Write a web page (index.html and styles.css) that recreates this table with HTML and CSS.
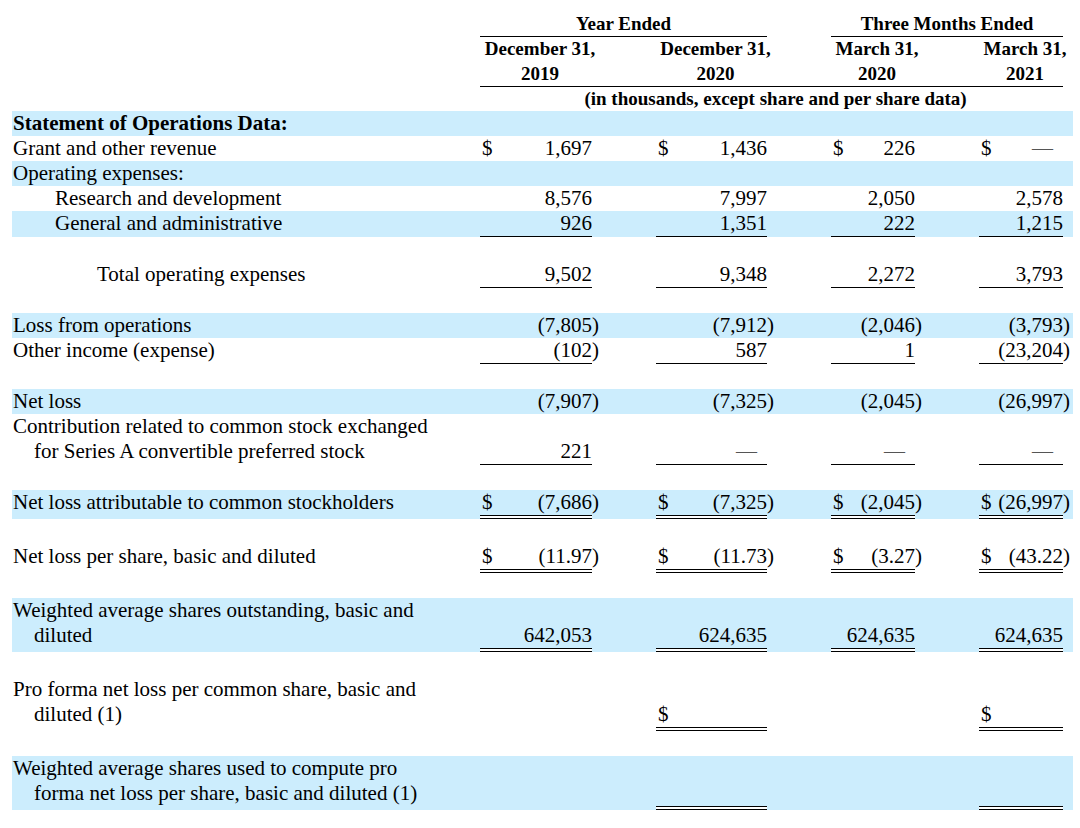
FILE: index.html
```html
<!DOCTYPE html>
<html lang="en">
<head>
<meta charset="utf-8">
<title>Statement of Operations Data</title>
<link rel="stylesheet" href="styles.css">
</head>
<body>
<div class="page">
<table class="fin">
  <colgroup>
    <col class="w-lbl">
    <col class="w-c1"><col class="w-p"><col class="w-g">
    <col class="w-c2"><col class="w-p"><col class="w-g">
    <col class="w-c3"><col class="w-p"><col class="w-g">
    <col class="w-c4"><col class="w-p"><col class="w-end">
  </colgroup>
  <thead>
    <tr class="h-top">
      <td></td>
      <th colspan="4" class="u">Year Ended</th>
      <td></td><td></td>
      <th colspan="4" class="u">Three Months Ended</th>
      <td></td><td></td>
    </tr>
    <tr class="h-mid">
      <td></td>
      <th><span class="hd">December 31,</span></th><td></td><td></td>
      <th><span class="hd">December 31,</span></th><td></td><td></td>
      <th><span class="hd">March 31,</span></th><td></td><td></td>
      <th><span class="hd">March 31,</span></th><td></td><td></td>
    </tr>
    <tr class="h-top">
      <td></td>
      <th class="u"><span class="hd">2019</span></th><td class="u"></td><td class="u"></td>
      <th class="u"><span class="hd">2020</span></th><td class="u"></td><td class="u"></td>
      <th class="u"><span class="hd">2020</span></th><td class="u"></td><td class="u"></td>
      <th class="u"><span class="hd">2021</span></th><td></td><td></td>
    </tr>
    <tr class="h-mid">
      <td></td>
      <th colspan="11">(in thousands, except share and per share data)</th>
      <td></td>
    </tr>
  </thead>
  <tbody>
    <tr class="b">
      <td class="lbl bold">Statement of Operations Data:</td>
      <td colspan="12"></td>
    </tr>
    <tr>
      <td class="lbl">Grant and other revenue</td>
      <td class="v"><span class="d">$</span>1,697</td><td class="p"></td><td></td>
      <td class="v"><span class="d">$</span>1,436</td><td class="p"></td><td></td>
      <td class="v"><span class="d">$</span>226</td><td class="p"></td><td></td>
      <td class="v"><span class="d">$</span><span class="dash">—</span></td><td class="p"></td><td></td>
    </tr>
    <tr class="b">
      <td class="lbl">Operating expenses:</td>
      <td colspan="12"></td>
    </tr>
    <tr>
      <td class="lbl in2">Research and development</td>
      <td class="v">8,576</td><td class="p"></td><td></td>
      <td class="v">7,997</td><td class="p"></td><td></td>
      <td class="v">2,050</td><td class="p"></td><td></td>
      <td class="v">2,578</td><td class="p"></td><td></td>
    </tr>
    <tr class="b">
      <td class="lbl in2">General and administrative</td>
      <td class="v u">926</td><td class="p"></td><td></td>
      <td class="v u">1,351</td><td class="p"></td><td></td>
      <td class="v u">222</td><td class="p"></td><td></td>
      <td class="v u">1,215</td><td class="p"></td><td></td>
    </tr>
    <tr class="sp"><td colspan="13"></td></tr>
    <tr>
      <td class="lbl in4">Total operating expenses</td>
      <td class="v u">9,502</td><td class="p"></td><td></td>
      <td class="v u">9,348</td><td class="p"></td><td></td>
      <td class="v u">2,272</td><td class="p"></td><td></td>
      <td class="v u">3,793</td><td class="p"></td><td></td>
    </tr>
    <tr class="sp"><td colspan="13"></td></tr>
    <tr class="b">
      <td class="lbl">Loss from operations</td>
      <td class="v">(7,805</td><td class="p">)</td><td></td>
      <td class="v">(7,912</td><td class="p">)</td><td></td>
      <td class="v">(2,046</td><td class="p">)</td><td></td>
      <td class="v">(3,793</td><td class="p">)</td><td></td>
    </tr>
    <tr>
      <td class="lbl">Other income (expense)</td>
      <td class="v u">(102</td><td class="p">)</td><td></td>
      <td class="v u">587</td><td class="p"></td><td></td>
      <td class="v u">1</td><td class="p"></td><td></td>
      <td class="v u">(23,204</td><td class="p">)</td><td></td>
    </tr>
    <tr class="sp"><td colspan="13"></td></tr>
    <tr class="b">
      <td class="lbl">Net loss</td>
      <td class="v">(7,907</td><td class="p">)</td><td></td>
      <td class="v">(7,325</td><td class="p">)</td><td></td>
      <td class="v">(2,045</td><td class="p">)</td><td></td>
      <td class="v">(26,997</td><td class="p">)</td><td></td>
    </tr>
    <tr class="tall ul1">
      <td class="lbl hang">Contribution related to common stock exchanged<br>for Series A convertible preferred stock</td>
      <td class="v u">221</td><td class="p"></td><td></td>
      <td class="v u"><span class="dash">—</span></td><td class="p"></td><td></td>
      <td class="v u"><span class="dash">—</span></td><td class="p"></td><td></td>
      <td class="v u"><span class="dash">—</span></td><td class="p"></td><td></td>
    </tr>
    <tr class="sp"><td colspan="13"></td></tr>
    <tr class="b">
      <td class="lbl">Net loss attributable to common stockholders</td>
      <td class="v uu"><span class="d">$</span>(7,686</td><td class="p">)</td><td></td>
      <td class="v uu"><span class="d">$</span>(7,325</td><td class="p">)</td><td></td>
      <td class="v uu"><span class="d">$</span>(2,045</td><td class="p">)</td><td></td>
      <td class="v uu"><span class="d">$</span>(26,997</td><td class="p">)</td><td></td>
    </tr>
    <tr class="sp"><td colspan="13"></td></tr>
    <tr>
      <td class="lbl">Net loss per share, basic and diluted</td>
      <td class="v uu"><span class="d">$</span>(11.97</td><td class="p">)</td><td></td>
      <td class="v uu"><span class="d">$</span>(11.73</td><td class="p">)</td><td></td>
      <td class="v uu"><span class="d">$</span>(3.27</td><td class="p">)</td><td></td>
      <td class="v uu"><span class="d">$</span>(43.22</td><td class="p">)</td><td></td>
    </tr>
    <tr class="sp"><td colspan="13"></td></tr>
    <tr class="b tall ul3">
      <td class="lbl hang">Weighted average shares outstanding, basic and<br>diluted</td>
      <td class="v uu">642,053</td><td class="p"></td><td></td>
      <td class="v uu">624,635</td><td class="p"></td><td></td>
      <td class="v uu">624,635</td><td class="p"></td><td></td>
      <td class="v uu">624,635</td><td class="p"></td><td></td>
    </tr>
    <tr class="sp"><td colspan="13"></td></tr>
    <tr class="tall ul3">
      <td class="lbl hang">Pro forma net loss per common share, basic and<br>diluted (1)</td>
      <td class="v"></td><td class="p"></td><td></td>
      <td class="v uu"><span class="d">$</span></td><td class="p"></td><td></td>
      <td class="v"></td><td class="p"></td><td></td>
      <td class="v uu"><span class="d">$</span></td><td class="p"></td><td></td>
    </tr>
    <tr class="sp"><td colspan="13"></td></tr>
    <tr class="b tall ul3">
      <td class="lbl hang">Weighted average shares used to compute pro<br>forma net loss per share, basic and diluted (1)</td>
      <td class="v"></td><td class="p"></td><td></td>
      <td class="v uu"></td><td class="p"></td><td></td>
      <td class="v"></td><td class="p"></td><td></td>
      <td class="v uu"></td><td class="p"></td><td></td>
    </tr>
  </tbody>
</table>
</div>
</body>
</html>
```

FILE: styles.css
```css
html, body {
  margin: 0;
  padding: 0;
  background: #ffffff;
}

body {
  font-family: "Liberation Serif", "Times New Roman", serif;
  color: #000000;
}

.page {
  padding: 11px 0 0 12px;
}

.fin {
  border-collapse: separate;
  border-spacing: 0;
  table-layout: fixed;
  width: 1061px;
  font-size: 21px;
  line-height: 25px;
}

.w-lbl { width: 468px; }
.w-c1 { width: 112px; }
.w-c2 { width: 111px; }
.w-c3 { width: 84px; }
.w-c4 { width: 84px; }
.w-p { width: 8px; }
.w-g { width: 56px; }
.w-end { width: 2px; }

.fin td,
.fin th {
  padding: 0;
  vertical-align: baseline;
  white-space: nowrap;
}

.fin thead th {
  font-size: 19px;
  font-weight: bold;
  text-align: center;
}

.fin .h-top th,
.fin .h-top td {
  line-height: 25px;
}

.fin .h-mid th,
.fin .h-mid td {
  line-height: 24px;
}

.fin thead .u {
  border-bottom: 1px solid #000;
}

.hd {
  display: block;
  margin-right: -8px;
  text-align: center;
}

.fin .b > td {
  background: #ccedfd;
  background-clip: padding-box;
}

.fin td.lbl {
  text-align: left;
  padding-left: 1px;
}

.bold {
  font-weight: bold;
}

.fin td.in2 {
  padding-left: 43px;
}

.fin td.in4 {
  padding-left: 85px;
}

.fin td.hang {
  padding-left: 22px;
  text-indent: -21px;
}

.fin .tall > td {
  vertical-align: bottom;
}

.fin .ul1 > td.lbl {
  padding-bottom: 1px;
}

.fin .ul3 > td.lbl {
  padding-bottom: 4px;
}

.v {
  text-align: right;
}

.d {
  float: left;
  padding-left: 2px;
}

.p {
  text-align: left;
}

.u {
  border-bottom: 1px solid #000;
}

.uu {
  border-bottom: 4px double #000;
}

.dash {
  display: inline-block;
  margin-right: 10px;
  color: #555;
}

.fin .sp > td {
  height: 25px;
}
```
